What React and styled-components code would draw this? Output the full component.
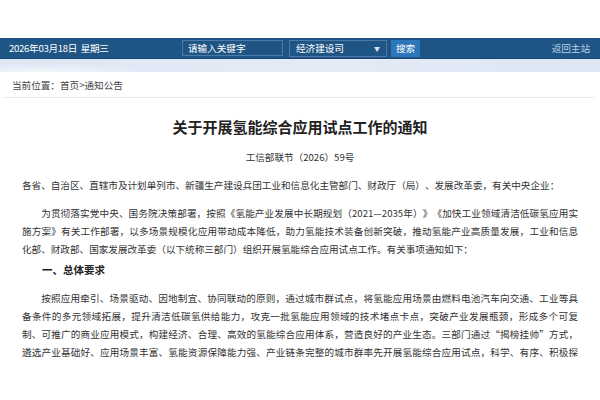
import React from "react";
import styled, { createGlobalStyle } from "styled-components";

const GlobalStyle = createGlobalStyle`
  html, body {
    margin: 0;
    padding: 0;
    background: #ffffff;
  }
  body {
    font-family: "Noto Sans CJK SC", "Liberation Sans", sans-serif;
    color: #333333;
    text-spacing-trim: space-all;
  }
  * {
    box-sizing: border-box;
  }
`;

const Page = styled.div`
  width: 600px;
  height: 400px;
  overflow: hidden;
  background: #ffffff;
`;

const TopSpace = styled.div`
  height: 38px;
`;

const Bar = styled.div`
  height: 21px;
  display: flex;
  align-items: center;
  background: #1f5585;
  border-bottom: 1px solid #184877;
  color: #ffffff;
  font-size: 9.6px;
  padding: 0 10px 0 9px;
`;

const DateText = styled.div`
  width: 173px;
  white-space: pre;
  letter-spacing: -0.3px;
`;

const SearchInput = styled.input`
  width: 101px;
  height: 16px;
  margin: 0;
  padding: 0 0 0 5px;
  border: 1px solid #4d7aa6;
  background: #1f5585;
  color: #ffffff;
  font-family: inherit;
  font-size: 9.6px;
  outline: none;

  &::placeholder {
    color: #ffffff;
    opacity: 1;
  }
`;

const Select = styled.div`
  width: 98px;
  height: 17px;
  margin-left: 6px;
  padding: 0 6px;
  display: flex;
  align-items: center;
  justify-content: space-between;
  border: 1px solid #4d7aa6;
  font-size: 9.6px;
`;

const Arrow = styled.span`
  font-size: 6px;
  color: #d7e3ef;
`;

const SearchButton = styled.button`
  width: 29px;
  height: 17px;
  margin-left: 4px;
  padding: 0;
  border: none;
  background: #2d76ba;
  color: #ffffff;
  font-family: inherit;
  font-size: 9.6px;
`;

const HomeLink = styled.a`
  margin-left: auto;
  color: #b7d0ea;
  font-size: 9.6px;
  text-decoration: none;
`;

const Band = styled.div`
  height: 13px;
  background:
    radial-gradient(ellipse 160px 14px at 40px 14px, rgba(255, 255, 255, 0.7), rgba(255, 255, 255, 0) 70%),
    linear-gradient(90deg, #dde7f4, #e3ebf6 50%, #dde7f4);
`;

const Crumbs = styled.div`
  height: 25px;
  padding-left: 12px;
  display: flex;
  align-items: center;
  font-size: 9.6px;
  color: #444444;
`;

const Article = styled.div`
  margin: 0 5px 0 3px;
  border-top: 1px solid #e9e9e9;
  padding: 0 17px 0 19px;
`;

const Title = styled.h1`
  margin: 19px 0 0;
  text-align: center;
  font-size: 15px;
  line-height: 20px;
  font-weight: 700;
  color: #222222;
`;

const DocNo = styled.div`
  margin-top: 11px;
  text-align: center;
  font-size: 9.6px;
  line-height: 18px;
`;

const Para = styled.p`
  margin: 10px 0 0;
  font-size: 9.6px;
  line-height: 18px;
  text-align: justify;
  text-align-last: ${(p) => (p.$continues ? "justify" : "auto")};
  text-indent: ${(p) => (p.$indent ? "2em" : "0")};
`;

const Heading = styled.h2`
  margin: 3px 0 0;
  padding-left: 20px;
  font-size: 10.5px;
  line-height: 18px;
  font-weight: 700;
  color: #222222;
`;

export default function App() {
  return (
    <Page>
      <GlobalStyle />
      <TopSpace />
      <Bar>
        <DateText>2026年03月18日  星期三</DateText>
        <SearchInput placeholder="请输入关键字" />
        <Select>
          <span>经济建设司</span>
          <Arrow>▼</Arrow>
        </Select>
        <SearchButton>搜索</SearchButton>
        <HomeLink href="#">返回主站</HomeLink>
      </Bar>
      <Band />
      <Crumbs>当前位置：首页&gt;通知公告</Crumbs>
      <Article>
        <Title>关于开展氢能综合应用试点工作的通知</Title>
        <DocNo>工信部联节（2026）59号</DocNo>
        <Para>
          各省、自治区、直辖市及计划单列市、新疆生产建设兵团工业和信息化主管部门、财政厅（局）、发展改革委，有关中央企业：
        </Para>
        <Para $indent>
          为贯彻落实党中央、国务院决策部署，按照《氢能产业发展中长期规划（2021—2035年）》《加快工业领域清洁低碳氢应用实施方案》有关工作部署，以多场景规模化应用带动成本降低，助力氢能技术装备创新突破，推动氢能产业高质量发展，工业和信息化部、财政部、国家发展改革委（以下统称三部门）组织开展氢能综合应用试点工作。有关事项通知如下：
        </Para>
        <Heading>一、总体要求</Heading>
        <Para $indent $continues>
          按照应用牵引、场景驱动、因地制宜、协同联动的原则，通过城市群试点，将氢能应用场景由燃料电池汽车向交通、工业等具备条件的多元领域拓展，提升清洁低碳氢供给能力，攻克一批氢能应用领域的技术堵点卡点，突破产业发展瓶颈，形成多个可复制、可推广的商业应用模式，构建经济、合理、高效的氢能综合应用体系，营造良好的产业生态。三部门通过“揭榜挂帅”方式，遴选产业基础好、应用场景丰富、氢能资源保障能力强、产业链条完整的城市群率先开展氢能综合应用试点，科学、有序、积极探
        </Para>
      </Article>
    </Page>
  );
}
